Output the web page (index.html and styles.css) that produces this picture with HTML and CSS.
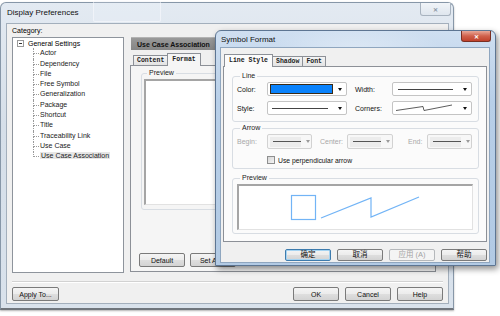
FILE: index.html
```html
<!DOCTYPE html>
<html lang="en">
  <head>
    <meta charset="UTF-8" />
    <title>Display Preferences</title>
    <link rel="stylesheet" href="styles.css">
  </head>
  <body>
    <div class="desk">
      <!-- background window -->
      <div class="win prefs">
        <div class="titlebar">
          <span class="title">Display Preferences</span>
          <span class="close close-idle">&#x2715;</span>
        </div>
        <div class="client">
          <div class="cat-label">Category:</div>
          <div class="main">
            <div class="tree">
              <div class="root"><span class="expander"></span>General Settings</div>
              <ul class="children">
                <li>Actor</li>
                <li>Dependency</li>
                <li>File</li>
                <li>Free Symbol</li>
                <li>Generalization</li>
                <li>Package</li>
                <li>Shortcut</li>
                <li>Title</li>
                <li>Traceability Link</li>
                <li>Use Case</li>
                <li><span class="selected">Use Case Association</span></li>
              </ul>
            </div>
            <div class="props">
              <div class="props-head">Use Case Association</div>
              <div class="tabs">
                <span class="tab">Content</span>
                <span class="tab active">Format</span>
              </div>
              <div class="tab-page">
                <fieldset class="group prefs-preview">
                  <legend>Preview</legend>
                  <div class="well tall"></div>
                </fieldset>
                <div class="page-buttons">
                  <button class="btn">Default</button>
                  <button class="btn">Set As...</button>
                </div>
              </div>
            </div>
          </div>
          <div class="separator"></div>
          <div class="footer">
            <button class="btn wide">Apply To...</button>
            <div class="spacer"></div>
            <button class="btn">OK</button>
            <button class="btn">Cancel</button>
            <button class="btn">Help</button>
          </div>
        </div>
      </div>

      <!-- dialog on top -->
      <div class="win symbol">
        <div class="titlebar">
          <span class="title">Symbol Format</span>
          <span class="close close-red">&#x2715;</span>
        </div>
        <div class="client">
          <div class="tabs">
            <span class="tab active">Line Style</span>
            <span class="tab">Shadow</span>
            <span class="tab">Font</span>
          </div>
          <div class="tab-page">
            <fieldset class="group">
              <legend>Line</legend>
              <div class="line-grid">
                <span class="lbl">Color:</span>
                <div class="combo"><span class="val"><span class="swatch"></span></span><span class="arrow"></span></div>
                <span class="lbl second">Width:</span>
                <div class="combo"><span class="val"><span class="rule"></span></span><span class="arrow"></span></div>
                <span class="lbl">Style:</span>
                <div class="combo"><span class="val"><span class="rule short"></span></span><span class="arrow"></span></div>
                <span class="lbl second">Corners:</span>
                <div class="combo">
                  <span class="val">
                    <svg width="58" height="8" viewBox="0 0 58 8">
                      <polyline points="1,6.5 28,2.5 29,6.5 57,1" fill="none" stroke="#333" stroke-width="0.8" />
                    </svg>
                  </span>
                  <span class="arrow"></span>
                </div>
              </div>
            </fieldset>

            <fieldset class="group arrow-group">
              <legend>Arrow</legend>
              <div class="arrow-row">
                <span class="lbl off w-begin">Begin:</span>
                <div class="combo off w45"><span class="val"><span class="rule"></span></span><span class="arrow"></span></div>
                <span class="lbl off w-center">Center:</span>
                <div class="combo off w46"><span class="val"><span class="rule"></span></span><span class="arrow"></span></div>
                <span class="lbl off w-end">End:</span>
                <div class="combo off w45"><span class="val"><span class="rule"></span></span><span class="arrow"></span></div>
              </div>
              <label class="check-row"><span class="checkbox"></span>Use perpendicular arrow</label>
            </fieldset>

            <fieldset class="group preview-group">
              <legend>Preview</legend>
              <div class="well">
                <svg width="234" height="44" viewBox="0 0 234 44">
                  <rect x="52.5" y="9.5" width="24" height="24" fill="none" stroke="#72b4f6" stroke-width="1.2" />
                  <polyline points="82,32 132,12 132,31 180,11" fill="none" stroke="#72b4f6" stroke-width="1.2" />
                </svg>
              </div>
            </fieldset>
          </div>
          <div class="dialog-buttons">
            <button class="btn cjk default">确定</button>
            <button class="btn cjk">取消</button>
            <button class="btn cjk" disabled>应用 (A)</button>
            <button class="btn cjk">帮助</button>
          </div>
        </div>
      </div>
    </div>
  </body>
</html>
```

FILE: styles.css
```css
body {
  margin: 0;
  background: #fff;
  font-family: 'Liberation Sans', Arial, sans-serif;
  font-size: 7px;
  color: #000;
}

.desk {
  position: relative;
  width: 500px;
  height: 316px;
  overflow: hidden;
}

/* windows */
.win {
  position: absolute;
  box-sizing: border-box;
  display: flex;
  flex-direction: column;
  border: 1px solid #8797a8;
  border-radius: 6px 6px 0 0;
}

.prefs {
  left: 0;
  top: 2px;
  width: 454px;
  height: 308px;
  background: linear-gradient(to bottom, #e3eaf2, #d6dfe9 40%, #d9e2ec);
  border-bottom: 2px solid #6f757c;
  box-shadow: 0 1px 2px rgba(0, 0, 0, 0.3);
}

.symbol {
  left: 215px;
  top: 30px;
  width: 281px;
  height: 236px;
  border-color: #5d7592;
  background:
    radial-gradient(ellipse 90px 30px at 50% 10%, rgba(255, 255, 255, 0.4), rgba(255, 255, 255, 0)),
    linear-gradient(to bottom, #cfdff1, #b8cfe8 30%, #b2cae4);
  box-shadow: 2px 3px 6px rgba(0, 0, 0, 0.45);
}

.titlebar {
  position: relative;
  display: flex;
  align-items: flex-start;
  flex-shrink: 0;
}

.prefs .titlebar {
  height: 20px;
  padding-left: 6px;
}

.prefs .titlebar::before {
  content: '';
  position: absolute;
  left: 92px;
  top: -3px;
  width: 66px;
  height: 20px;
  border: 1px solid rgba(255, 255, 255, 0.45);
  border-radius: 2px;
  background: rgba(240, 244, 255, 0.2);
}

.symbol .titlebar {
  height: 16px;
  padding-left: 5px;
}

.title {
  font-size: 8px;
  line-height: 8px;
  color: #111;
}

.prefs .title {
  margin-top: 6px;
}

.symbol .title {
  margin-top: 5px;
}

.close {
  margin-left: auto;
  display: flex;
  align-items: center;
  justify-content: center;
  box-sizing: border-box;
  font-size: 6px;
  font-weight: bold;
  border-radius: 0 0 3px 3px;
}

.close-idle {
  width: 31px;
  height: 13px;
  margin-right: 2px;
  border: 1px solid #a8b3bf;
  border-top: none;
  background: linear-gradient(to bottom, #f1f4f8, #dfe6ee);
  color: #8a96a3;
}

.close-red {
  width: 30px;
  height: 11px;
  margin-right: 4px;
  border: 1px solid #7a2e22;
  border-top: none;
  background: linear-gradient(to bottom, #e9a899, #d0614c 50%, #c0412b);
  color: #fff;
}

.client {
  flex: 1;
  box-sizing: border-box;
  display: flex;
  flex-direction: column;
  background: #f0f0f0;
  border: 1px solid #a3afbc;
}

.prefs .client {
  margin: 0 4px 4px 5px;
  padding: 2px 5px 2px 5px;
}

.symbol .client {
  margin: 0 5px 5px 4px;
  padding: 6px 2px 1px 2px;
  border-color: #8fa6bf;
}

/* background dialog */
.cat-label {
  line-height: 10px;
  margin-bottom: 1px;
}

.main {
  display: flex;
  gap: 6px;
  height: 236px;
}

.tree {
  width: 112px;
  box-sizing: border-box;
  border: 1px solid #8e949c;
  background: #fff;
}

.root {
  display: flex;
  align-items: center;
  height: 10.3px;
  padding-left: 4px;
  white-space: nowrap;
}

.expander {
  position: relative;
  width: 7px;
  height: 7px;
  box-sizing: border-box;
  border: 1px solid #9a9a9a;
  margin-right: 4px;
  background: #fff;
}

.expander::after {
  content: '';
  position: absolute;
  left: 1px;
  top: 2px;
  width: 3px;
  border-top: 1px solid #333;
}

.children {
  list-style: none;
  margin: 0;
  padding-left: 27px;
}

.children li {
  position: relative;
  line-height: 10.3px;
  height: 10.3px;
  white-space: nowrap;
  color: #1a1a1a;
}

.children li::before {
  content: '';
  position: absolute;
  left: -7px;
  top: 0;
  width: 5px;
  height: 5px;
  border-left: 1px dotted #9a9a9a;
  border-bottom: 1px dotted #9a9a9a;
}

.children li:not(:last-child)::after {
  content: '';
  position: absolute;
  left: -7px;
  top: 5px;
  height: 6px;
  border-left: 1px dotted #9a9a9a;
}

.selected {
  background: #e6e6e6;
  padding: 0 1px;
}

.props {
  width: 306px;
  display: flex;
  flex-direction: column;
}

.props-head {
  height: 13px;
  margin-left: 1px;
  padding-left: 6px;
  line-height: 13px;
  font-weight: bold;
  color: #111;
  background: linear-gradient(to bottom, #999, #858585);
  border-top: 1px solid #b3b3b3;
  box-sizing: border-box;
}

.tabs {
  display: flex;
  align-items: flex-end;
  height: 12px;
  flex-shrink: 0;
}

.props .tabs {
  margin-top: 3px;
  padding-left: 3px;
}

.symbol .tabs {
  padding-left: 1px;
}

.tab {
  position: relative;
  height: 10px;
  box-sizing: border-box;
  padding: 0 3px;
  border: 1px solid #8c9097;
  border-bottom: none;
  margin-right: -1px;
  background: linear-gradient(to bottom, #f4f4f4, #e3e3e3);
  font-family: 'Liberation Mono', 'DejaVu Sans Mono', monospace;
  font-size: 6.5px;
  font-weight: bold;
  line-height: 9px;
  color: #222;
  white-space: nowrap;
}

.tab.active {
  z-index: 1;
  height: 13px;
  margin-bottom: -1px;
  padding: 0 4px;
  line-height: 11px;
  background: #fbfbfb;
}

.props .tab.active {
  background: #f5f5f5;
}

.tab-page {
  box-sizing: border-box;
  border: 1px solid #8c9097;
  background: #fbfbfb;
}

.props .tab-page {
  flex: 1;
  display: flex;
  flex-direction: column;
  margin-bottom: 1px;
  padding: 3px 8px 4px 8px;
  background: #f5f5f5;
}

.symbol .tab-page {
  padding: 5px 7px 7px 8px;
}

.group {
  margin: 0;
  border: 1px solid #d8dde3;
  border-radius: 3px;
  min-width: 0;
}

.group legend {
  margin-left: 3px;
  padding: 0 2px;
  font-size: 7px;
  line-height: 8px;
  color: #222;
}

.prefs-preview {
  margin-left: 2px;
  padding: 2px 5px 4px 2px;
}

.well {
  box-sizing: border-box;
  background: #fff;
  border-top: 2px solid #a5a5a5;
  border-left: 2px solid #a5a5a5;
  border-right: 1px solid #e2e2e2;
  border-bottom: 1px solid #e2e2e2;
}

.well.tall {
  height: 126px;
}

.page-buttons {
  margin-top: auto;
  display: flex;
  gap: 5px;
}

.separator {
  margin-top: 8px;
  border-top: 1px solid #d2d2d2;
  border-bottom: 1px solid #fff;
}

.footer {
  display: flex;
  gap: 6px;
  margin-top: 4px;
}

.spacer {
  flex: 1;
}

/* buttons */
.btn {
  width: 46px;
  height: 14px;
  box-sizing: border-box;
  padding: 0;
  border: 1px solid #7a7a7a;
  border-radius: 2px;
  background: linear-gradient(to bottom, #f4f4f4, #ececec 48%, #dedede 52%, #d3d3d3);
  font-family: 'Liberation Sans', Arial, sans-serif;
  font-size: 7px;
  color: #111;
}

.btn.wide {
  width: 47px;
}

.btn.cjk {
  height: 12px;
  font-family: 'Liberation Sans', 'Noto Sans CJK SC', sans-serif;
  font-size: 7.5px;
  line-height: 10px;
}

.btn.default {
  border-color: #3d7bad;
  box-shadow: inset 0 0 0 1px #a6d4f2;
}

.btn:disabled {
  border-color: #b5b8bb;
  background: #f4f4f4;
  color: #a3a3a3;
}

.dialog-buttons {
  display: flex;
  justify-content: flex-end;
  gap: 6px;
  margin-top: 7px;
}

/* symbol format groups */
.line-grid {
  display: grid;
  grid-template-columns: 30px 80px 45px 80px;
  row-gap: 5px;
  align-items: center;
}

.symbol .group {
  padding: 2px 5px 6px 4px;
}

.symbol .arrow-group {
  margin-top: 2px;
  padding-bottom: 3px;
}

.symbol .preview-group {
  margin-top: 5px;
  padding: 2px 5px 3px 4px;
}

.preview-group .well {
  height: 46px;
}

.preview-group svg {
  display: block;
}

.lbl {
  white-space: nowrap;
  color: #111;
}

.lbl.second {
  padding-left: 8px;
}

.lbl.off {
  color: #a8a8a8;
}

.combo {
  display: flex;
  align-items: center;
  height: 14px;
  box-sizing: border-box;
  padding: 0 4px 0 2px;
  border: 1px solid #c4c4c4;
  border-radius: 2px;
  background: #fff;
}

.combo .val {
  flex: 1;
  display: flex;
  align-items: center;
  height: 10px;
}

.combo .arrow {
  margin-left: 5px;
  width: 0;
  height: 0;
  border-left: 2px solid transparent;
  border-right: 2px solid transparent;
  border-top: 3px solid #111;
}

.swatch {
  width: 100%;
  height: 10px;
  box-sizing: border-box;
  background: #0a82fb;
  border: 1px solid #3b2a14;
}

.rule {
  width: 55px;
  margin-left: 3px;
  border-top: 1px solid #444;
}

.rule.short {
  width: 56px;
  margin-left: 2px;
}

.arrow-row {
  display: flex;
  align-items: center;
}

.w-begin {
  width: 30px;
}

.w-center {
  width: 27px;
  padding-left: 8px;
}

.w-end {
  width: 19px;
  padding-left: 15px;
}

.combo.w45 {
  width: 45px;
}

.combo.w46 {
  width: 46px;
}

.combo.off {
  height: 15px;
  border-color: #d2d2d2;
  background: #f7f7f7;
}

.combo.off .val {
  background: #ececec;
}

.combo.off .rule {
  width: 28px;
  border-top-color: #555;
}

.combo.off .arrow {
  border-top-color: #9a9a9a;
}

.check-row {
  display: flex;
  align-items: center;
  height: 10px;
  margin-top: 6px;
  padding-left: 30px;
  color: #111;
  font-size: 6.8px;
}

.checkbox {
  width: 8px;
  height: 8px;
  box-sizing: border-box;
  margin-right: 3px;
  border: 1px solid #8e8f8f;
  background: linear-gradient(135deg, #d6d6d6, #f4f4f4);
}
```
